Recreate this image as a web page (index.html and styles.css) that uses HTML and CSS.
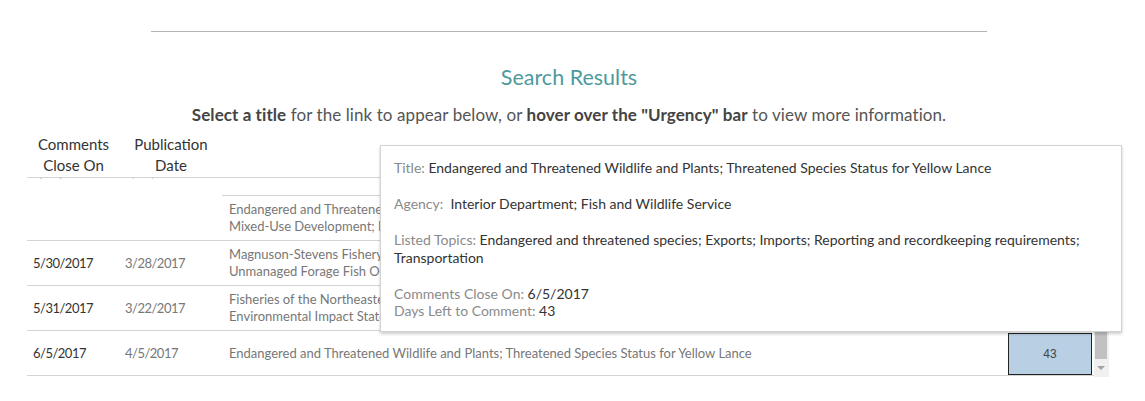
FILE: index.html
```html
<!DOCTYPE html>
<html lang="en">
<head>
  <meta charset="UTF-8">
  <title>Search Results</title>
  <link rel="stylesheet" href="styles.css">
</head>
<body>
  <div class="page">
    <div class="divider"></div>

    <h1 class="heading">Search Results</h1>
    <p class="intro">
      <b>Select a title</b> for the link to appear below, or <b>hover over the "Urgency" bar</b> to view more information.
    </p>

    <!-- Results table -->
    <div class="results">
      <div class="thead">
        <div class="th">Comments<br>Close On</div>
        <div class="th">Publication<br>Date</div>
      </div>

      <div class="tbody">
        <div class="rows">
          <div class="rows-inner">
            <div class="row merged">
              <div class="cell date">5/26/2017</div>
              <div class="cell pub">3/27/2017</div>
              <div class="cell title top">Endangered and Threatened Wildlife and Plants; Threatened Status for the Kenk's Amphipod</div>
              <div class="cell urgency"><div class="bar" style="width: 70px">34</div></div>
            </div>
            <div class="row">
              <div class="cell date"></div>
              <div class="cell pub"></div>
              <div class="cell title">Endangered and Threatened Wildlife; Proposed Incidental Take Permit for the Coastal Dunes<br>Mixed-Use Development; Marion County, Florida</div>
              <div class="cell urgency"><div class="bar" style="width: 70px">34</div></div>
            </div>
            <div class="row">
              <div class="cell date">5/30/2017</div>
              <div class="cell pub">3/28/2017</div>
              <div class="cell title">Magnuson-Stevens Fishery Conservation and Management Act Provisions; Fisheries of the Northeastern<br>Unmanaged Forage Fish Omnibus Amendment</div>
              <div class="cell urgency"><div class="bar" style="width: 72px">37</div></div>
            </div>
            <div class="row">
              <div class="cell date">5/31/2017</div>
              <div class="cell pub">3/22/2017</div>
              <div class="cell title">Fisheries of the Northeastern United States; Atlantic Sea Scallop Fishery; Amendment 19 and<br>Environmental Impact Statement</div>
              <div class="cell urgency"><div class="bar" style="width: 74px">38</div></div>
            </div>
            <div class="row">
              <div class="cell date">6/5/2017</div>
              <div class="cell pub">4/5/2017</div>
              <div class="cell title">Endangered and Threatened Wildlife and Plants; Threatened Species Status for Yellow Lance</div>
              <div class="cell urgency"><div class="bar" style="width: 84px">43</div></div>
            </div>
          </div>
        </div>

        <div class="scrollbar">
          <div class="thumb"></div>
          <div class="arrow"></div>
        </div>
      </div>
    </div>

    <!-- Hover tooltip -->
    <div class="tooltip">
      <p><span class="label">Title:</span> Endangered and Threatened Wildlife and Plants; Threatened Species Status for Yellow Lance</p>
      <p><span class="label">Agency:</span>&nbsp; Interior Department; Fish and Wildlife Service</p>
      <p><span class="label">Listed Topics:</span> Endangered and threatened species; Exports; Imports; Reporting and recordkeeping requirements; Transportation</p>
      <p>
        <span class="label">Comments Close On:</span> 6/5/2017<br>
        <span class="label">Days Left to Comment:</span> 43
      </p>
    </div>
  </div>
</body>
</html>
```

FILE: styles.css
```css
* {
  margin: 0;
  padding: 0;
  box-sizing: border-box;
}

body {
  width: 1145px;
  height: 401px;
  overflow: hidden;
  font-family: Lato, 'Liberation Sans', sans-serif;
  background: white;
  color: #333;
}

.page {
  position: relative;
  width: 1145px;
  height: 401px;
  padding-top: 31px;
}

.divider {
  width: 836px;
  margin-left: 151px;
  border-top: 1px solid #b4b4b4;
}

.heading {
  margin-top: 32px;
  font-size: 21.5px;
  font-weight: 400;
  color: #4e9a9c;
  text-align: center;
  line-height: 26px;
  padding-right: 7px;
}

.intro {
  margin-top: 15px;
  font-size: 17px;
  line-height: 20px;
  letter-spacing: 0.08px;
  color: #555;
  text-align: center;
  padding-right: 7px;
}

.intro b {
  color: #444;
  font-weight: 700;
}

/* table */

.results {
  margin: 9px 0 0 27px;
  width: 1082px;
}

.thead {
  display: grid;
  grid-template-columns: 93px 102px;
  padding-bottom: 1px;
}

.th {
  font-size: 15px;
  line-height: 21px;
  text-align: center;
  color: #333;
}

.tbody {
  display: flex;
  height: 200px;
  border-top: 1px solid #d4d4d4;
}

.rows {
  flex: 1;
  overflow: hidden;
}

.rows-inner {
  margin-top: -27px;
}

.row {
  display: grid;
  grid-template-columns: 93px 102px 1fr 98px;
  height: 45px;
}

.cell {
  display: flex;
  align-items: center;
  border-bottom: 1px solid #d4d4d4;
}

.row.merged .date,
.row.merged .pub {
  border-bottom-color: transparent;
}

.date {
  padding-left: 6px;
  font-size: 13px;
  letter-spacing: -0.5px;
  color: #333;
}

.pub {
  padding-left: 5px;
  font-size: 13px;
  letter-spacing: -0.5px;
  color: #777;
}

.title {
  padding-left: 7px;
  font-size: 13px;
  line-height: 17px;
  color: #777;
  white-space: nowrap;
}

.title.top {
  align-items: flex-start;
  padding-top: 6px;
}

.urgency {
  align-items: stretch;
  padding: 2px 0 0 12px;
}

.bar {
  background: #b9cfe4;
  border: 1px solid #222;
  display: flex;
  align-items: center;
  justify-content: center;
  font-family: 'Liberation Sans', Arial, sans-serif;
  font-size: 12px;
  color: #444;
}

.scrollbar {
  width: 15px;
  background: #f0f0f0;
  display: flex;
  flex-direction: column;
  justify-content: flex-end;
  padding-left: 1px;
  padding-right: 2px;
}

.thumb {
  height: 60px;
  background: #c1c1c1;
}

.arrow {
  height: 18px;
  position: relative;
}

.arrow::after {
  content: '';
  position: absolute;
  left: 2px;
  top: 7px;
  border-left: 4px solid transparent;
  border-right: 4px solid transparent;
  border-top: 4px solid #a3a3a3;
}

/* tooltip */

.tooltip {
  position: absolute;
  left: 380px;
  top: 145px;
  width: 742px;
  height: 187px;
  padding: 13px 13px;
  background: white;
  border: 1px solid #d2d2d2;
  box-shadow: 0 2px 3px rgba(0, 0, 0, 0.2);
  font-size: 14px;
  line-height: 17.5px;
  color: #333;
}

.tooltip p {
  margin-bottom: 18.5px;
}

.tooltip .label {
  color: #8a8a8a;
}
```
